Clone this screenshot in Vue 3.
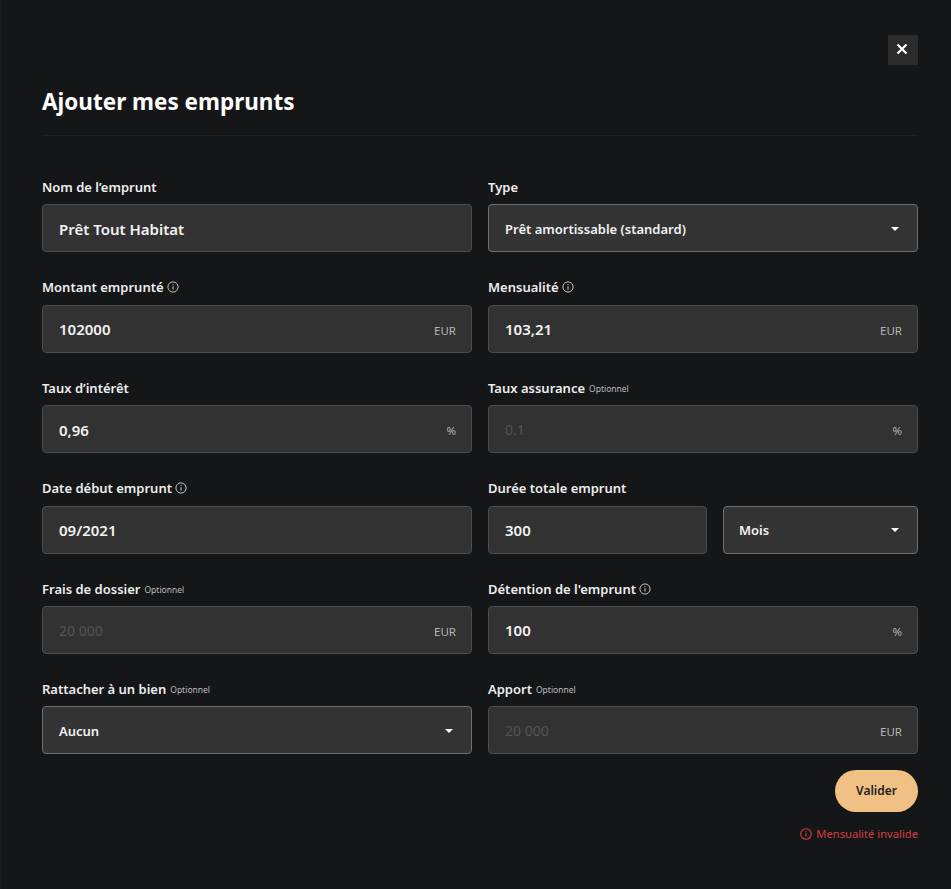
<script setup>
const rows = [
  { label: 'Nom de l’emprunt', value: 'Prêt Tout Habitat' },
  { label: 'Type', value: 'Prêt amortissable (standard)', select: true, small: true },
  { label: 'Montant emprunté', info: true, value: '102000', unit: 'EUR' },
  { label: 'Mensualité', info: true, value: '103,21', unit: 'EUR' },
  { label: 'Taux d’intérêt', value: '0,96', unit: '%' },
  { label: 'Taux assurance', optional: true, placeholder: '0.1', unit: '%' },
  { label: 'Date début emprunt', info: true, value: '09/2021' },
  { label: 'Durée totale emprunt', value: '300', duration: true },
  { label: 'Frais de dossier', optional: true, placeholder: '20 000', unit: 'EUR' },
  { label: 'Détention de l\'emprunt', info: true, value: '100', unit: '%' },
  { label: 'Rattacher à un bien', optional: true, value: 'Aucun', select: true, small: true },
  { label: 'Apport', optional: true, placeholder: '20 000', unit: 'EUR' }
]
</script>

<template>
  <div class="modal">
    <div class="top">
      <button class="close" aria-label="Fermer">
        <svg width="12" height="12" viewBox="0 0 12 12"><path d="M1.5 1.5l9 9M10.5 1.5l-9 9" stroke="#fff" stroke-width="2.2" fill="none" /></svg>
      </button>
    </div>
    <h1 class="title">Ajouter mes emprunts</h1>
    <div class="form">
      <div v-for="r in rows" :key="r.label" class="field">
        <div class="label">
          <span>{{ r.label }}</span>
          <small v-if="r.optional">Optionnel</small>
          <svg v-if="r.info" class="info" width="12" height="12" viewBox="0 0 12 12">
            <circle cx="6" cy="6" r="5.1" fill="none" stroke="#c4c4c4" stroke-width="1" />
            <path d="M6 5.2v3.4M6 3.2v1" stroke="#c4c4c4" stroke-width="1.1" fill="none" />
          </svg>
        </div>
        <div v-if="r.duration" class="split">
          <div class="box"><span class="val">{{ r.value }}</span></div>
          <div class="box select small-box">
            <span class="val small">Mois</span>
            <span class="caret"></span>
          </div>
        </div>
        <div v-else class="box" :class="{ select: r.select }">
          <span v-if="r.placeholder" class="ph">{{ r.placeholder }}</span>
          <span v-else class="val" :class="{ small: r.small }">{{ r.value }}</span>
          <span v-if="r.unit" class="unit">{{ r.unit }}</span>
          <span v-if="r.select" class="caret"></span>
        </div>
      </div>
    </div>
    <div class="actions">
      <button class="submit">Valider</button>
      <div class="error">
        <svg width="12" height="12" viewBox="0 0 12 12">
          <circle cx="6" cy="6" r="5.3" fill="none" stroke="#d13f42" stroke-width="1.1" />
          <path d="M6 5.2v3.4M6 3.2v1" stroke="#d13f42" stroke-width="1.2" fill="none" />
        </svg>
        <span>Mensualité invalide</span>
      </div>
    </div>
  </div>
</template>

<style>
html, body { margin: 0; background: #151618; }
</style>

<style scoped>
.modal {
  position: relative;
  width: 951px;
  height: 889px;
  box-sizing: border-box;
  padding: 35px 33px 0 41px;
  background: #151618;
  border-left: 1px solid #1c1d20;
  font-family: "Noto Sans", sans-serif;
  color: #f2f2f2;
  overflow: hidden;
}
.modal::before {
  content: "";
  position: absolute;
  left: -1px;
  top: 83px;
  width: 1px;
  height: 14px;
  background: #2c2c2d;
}
.top { display: flex; justify-content: flex-end; height: 30px; }
.close {
  width: 30px; height: 30px; padding: 0 2px 2px 0; border: 0;
  background: #2b2b2b;
  display: flex; align-items: center; justify-content: center;
}
.title {
  margin: 18.4px 0 0;
  height: 52px;
  line-height: 38px;
  font-size: 22.5px;
  font-weight: 700;
  color: #fff;
  border-bottom: 1px solid #212224;
}
.form {
  margin-top: 41px;
  display: grid;
  grid-template-columns: 430px 430px;
  column-gap: 16px;
  row-gap: 25.4px;
}
.label {
  height: 20px;
  margin-top: -0.4px;
  margin-bottom: 7.4px;
  display: flex;
  align-items: center;
  gap: 4px;
  font-size: 13px;
  font-weight: 600;
  line-height: 20px;
  color: #eee;
}
.label small { font-size: 8.5px; font-weight: 400; color: #bdbdbd; margin-top: 2px; }
.info { margin-left: -1px; }
.box {
  height: 48px;
  box-sizing: border-box;
  flex: 1;
  display: flex;
  align-items: center;
  justify-content: space-between;
  padding: 1px 15px 0 16px;
  background: #323232;
  border: 1px solid #4c4c4c;
  border-radius: 4px;
}
.box.select { border-color: #707070; background: #343434; }
.split { display: flex; gap: 16px; }
.small-box { flex: 0 0 195px; padding-left: 15px; }
.val { font-size: 15px; font-weight: 600; color: #f2f2f2; }
.val.small { font-size: 13px; }
.ph { font-size: 14px; color: #555; }
.unit { font-size: 11.5px; color: #b5b5b5; margin-top: 2px; }
.caret {
  width: 0; height: 0; margin-right: 3px;
  border-left: 4.5px solid transparent;
  border-right: 4.5px solid transparent;
  border-top: 4.5px solid #fff;
}
.actions {
  margin-top: 15.6px;
  display: flex;
  flex-direction: column;
  align-items: flex-end;
}
.submit {
  width: 83px; height: 42px; border: 0; padding: 0;
  border-radius: 21px;
  background: #f1c084;
  color: #23211f;
  font-family: inherit;
  font-size: 12px;
  font-weight: 600;
}
.error {
  margin-top: 14.5px;
  display: flex;
  align-items: center;
  gap: 4px;
  font-size: 11.2px;
  color: #d13f42;
}
</style>
